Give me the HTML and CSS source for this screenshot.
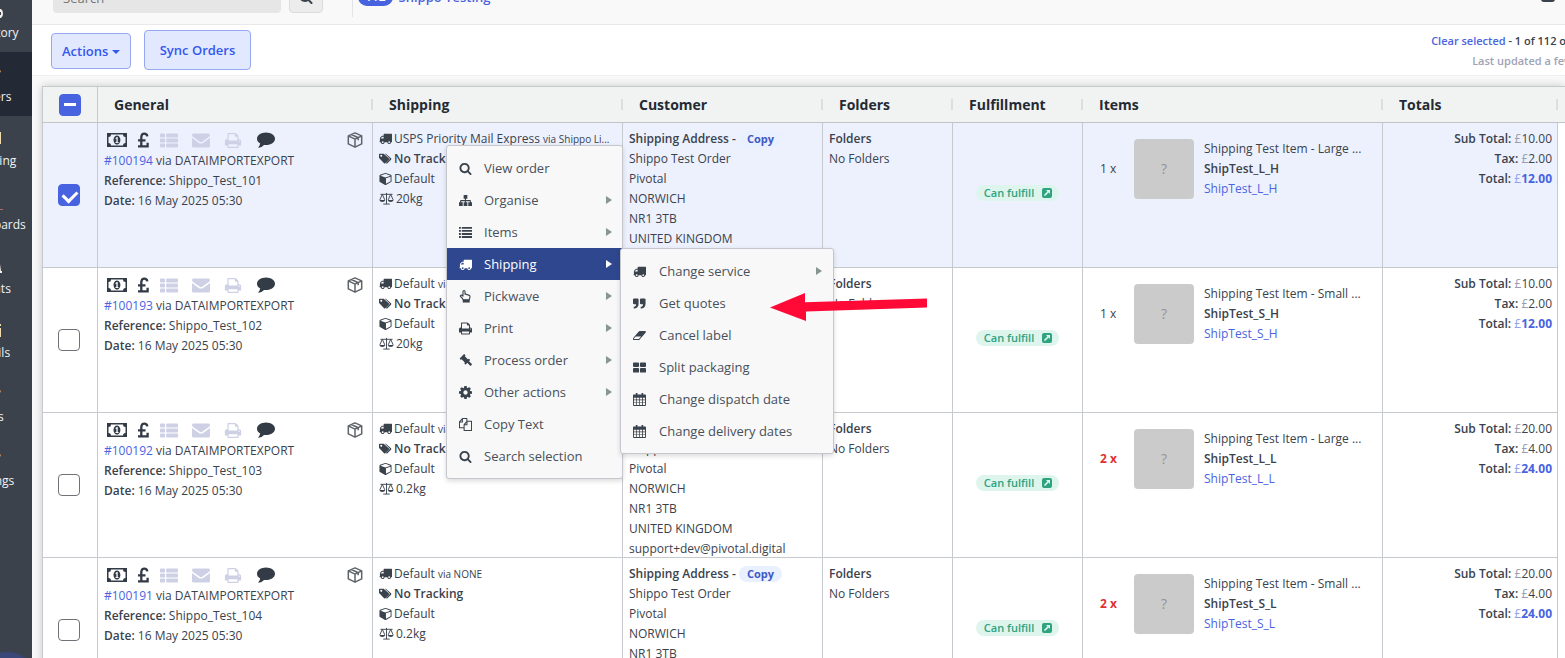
FILE: index.html
```html
<!DOCTYPE html>
<html lang="en">
<head>
  <meta charset="UTF-8" />
  <title>Orders</title>
  <link rel="stylesheet" href="styles.css">
</head>
<body>

  <!-- icon sprite -->
  <svg class="sprite" aria-hidden="true">
    <symbol id="i-search" viewBox="0 0 1792 1792"><path d="M1216 832q0-185-131.5-316.5t-316.5-131.5-316.5 131.5-131.5 316.5 131.5 316.5 316.5 131.5 316.5-131.5 131.5-316.5zm512 832q0 52-38 90t-90 38q-54 0-90-38l-343-342q-179 124-399 124-143 0-273.5-55.5t-225-150-150-225-55.5-273.5 55.5-273.5 150-225 225-150 273.5-55.5 273.5 55.5 225 150 150 225 55.5 273.5q0 220-124 399l343 343q37 37 37 90z"/></symbol>
    <symbol id="i-truck" viewBox="0 128 1792 1536"><path d="M640 1408q0-52-38-90t-90-38-90 38-38 90 38 90 90 38 90-38 38-90zm-384-512h384v-256h-158q-13 0-22 9l-195 195q-9 9-9 22v30zm1280 512q0-52-38-90t-90-38-90 38-38 90 38 90 90 38 90-38 38-90zm256-1088v1024q0 15-4 26.5t-13.5 18.5-16.5 11.5-23.5 6-22.5 2-25.5 0-22.5-.5q0 106-75 181t-181 75-181-75-75-181h-384q0 106-75 181t-181 75-181-75-75-181h-64q-3 0-22.5.5t-25.5 0-22.5-2-23.5-6-16.5-11.5-13.5-18.5-4-26.5q0-26 19-45t45-19v-320q0-8-.5-35t0-38 2.5-34.5 6.5-37 14-30.5 22.5-30l198-198q19-19 50.5-32t58.5-13h160v-192q0-26 19-45t45-19h1024q26 0 45 19t19 45z"/></symbol>
    <symbol id="i-tags" viewBox="0 0 16 14"><path fill-rule="evenodd" d="M.8 1h5l6.300 5.800q.7.800 0 1.600l-4.300 4.400q-.8.700-1.600 0L.4 6.800q-.4-.4-.4-1V1.800Q0 1 .8 1zM2.700 2.500a1.200 1.200 0 1 0 .1 0z"/><path d="M7.300 1h1.100l6.400 5.800q.8.800 0 1.600l-4.400 4.500q-.8.700-1.600 0l-.3-.3 4.500-4.600q.5-.8-.1-1.400z"/></symbol>
    <symbol id="i-cube" viewBox="0 0 1664 1792"><path d="M896 1629l640-349v-636l-640 233v752zm-64-865l698-254-698-254-698 254zm832-252v768q0 35-18 65t-49 47l-704 384q-28 16-61 16t-61-16l-704-384q-31-17-49-47t-18-65v-768q0-40 23-73t61-47l704-256q22-8 44-8t44 8l704 256q38 14 61 47t23 73z"/></symbol>
    <symbol id="i-scale" viewBox="0 0 16 14"><path fill="none" stroke="currentColor" d="M1.500 2.500h13M8 1v12M4.500 13h7M3.500 2.500L.8 8.500M3.500 2.500l2.700 6M12.500 2.500l-2.700 6M12.500 2.500l2.700 6"/><path d="M.3 8.500h6.400q-.6 2.300-3.200 2.300T.3 8.500zM9.300 8.500h6.400q-.6 2.300-3.200 2.300t-3.200-2.300z"/></symbol>
    <symbol id="i-money" viewBox="0 0 20 14"><path fill-rule="evenodd" d="M0 0h20v14H0zM4 1.500q0 2.500-2.500 2.500v6q2.500 0 2.500 2.500h12q0-2.500 2.500-2.500V4Q16 4 16 1.500z"/><path fill-rule="evenodd" d="M10 2.500a3.400 4.500 0 1 1-.1 0zM9.800 4L8.300 5.200l.6.700.5-.3V9H8.500v1h3V9h-.8V4z"/></symbol>
    <symbol id="i-gbp" viewBox="0 0 12 16"><path fill="none" stroke="currentColor" stroke-width="2.300" d="M10.300 4.300Q10 1.700 7.300 1.700T4.300 5v9.500M1 8.300h7.500M1 14.400h9.600v-3.700"/></symbol>
    <symbol id="i-thlist" viewBox="0 0 18 14"><path d="M.8 0h3.400q.8 0 .8.800v2.400q0 .8-.8.800H.8Q0 4 0 3.200V.8Q0 0 .8 0zM7 0h10.200q.8 0 .8.800v2.400q0 .8-.8.800H7q-.8 0-.8-.8V.8Q6.200 0 7 0zM.8 5h3.400q.8 0 .8.800v2.400q0 .8-.8.800H.8Q0 9 0 8.200V5.800Q0 5 .8 5zM7 5h10.200q.8 0 .8.800v2.400q0 .8-.8.800H7q-.8 0-.8-.8V5.800Q6.200 5 7 5zM.8 10h3.400q.8 0 .8.800v2.400q0 .8-.8.800H.8q-.8 0-.8-.8v-2.400q0-.8.8-.8zM7 10h10.200q.8 0 .8.800v2.400q0 .8-.8.800H7q-.8 0-.8-.8v-2.400q0-.8.8-.8z"/></symbol>
    <symbol id="i-mail" viewBox="0 0 18 14"><path d="M0 1.500Q0 0 1.500 0h15Q18 0 18 1.500q0 1.300-1.500 2.300l-6 4.200q-1.500 1-3 0l-6-4.200Q0 2.800 0 1.500z"/><path d="M0 4.600l6.500 4.600q2.500 1.700 5 0L18 4.600v7.900q0 1.500-1.500 1.500h-15Q0 14 0 12.500z"/></symbol>
    <symbol id="i-print" viewBox="0 128 1664 1536"><path d="M384 1536h896v-256h-896v256zm0-640h896v-384h-160q-40 0-68-28t-28-68v-160h-640v640zm1152 64q0-26-19-45t-45-19-45 19-19 45 19 45 45 19 45-19 19-45zm128 0v416q0 13-9.500 22.500t-22.500 9.500h-224v160q0 40-28 68t-68 28h-960q-40 0-68-28t-28-68v-160h-224q-13 0-22.500-9.500t-9.500-22.500v-416q0-79 56.500-135.500t135.500-56.500h64v-544q0-40 28-68t68-28h672q40 0 88 20t76 48l152 152q28 28 48 76t20 88v256h64q79 0 135.500 56.500t56.500 135.500z"/></symbol>
    <symbol id="i-comment" viewBox="0 0 18 16"><path d="M9 .5c5 0 9 2.800 9 6.300s-4 6.300-9 6.300q-1 0-2-.2-2.300 2.600-5.300 2.900-.6 0-.3-.6Q3 13.500 3.200 11.600 0 9.800 0 6.800C0 3.300 4 .5 9 .5z"/></symbol>
    <symbol id="i-box" viewBox="0 0 16 16"><path fill="none" stroke="currentColor" stroke-width="1.500" stroke-linejoin="round" d="M8 .9l6.700 3v8L8 15.200l-6.700-3.300v-8zM1.300 3.900L8 7.200l6.700-3.300M8 7.200v8M4.500 2.500l6.700 3.200v2.500"/></symbol>
    <symbol id="i-sitemap" viewBox="0 0 14 14"><path d="M5 1h4v4H7.500v1.500H12q.8 0 .8.800V9H14v4h-4V9h1.600V7.700H7.500V9H9v4H5V9h1.400V7.700h-4V9H4v4H0V9h1.200V7.300q0-.8.8-.8h4.400V5H5z"/></symbol>
    <symbol id="i-list" viewBox="0 0 14 14"><path d="M0 1h2v2H0zM3 1h11v2H3zM0 4.300h2v2H0zM3 4.300h11v2H3zM0 7.600h2v2H0zM3 7.600h11v2H3zM0 10.900h2v2H0zM3 10.900h11v2H3z"/></symbol>
    <symbol id="i-hand" viewBox="0 0 14 14"><path fill="none" stroke="currentColor" stroke-width="1.200" stroke-linejoin="round" d="M4.500 10.500Q3.800 8.700 1.700 7q-.7-.9.300-1.400 1-.3 2.300.9V1.700q.1-1.100 1.100-1.100t1.100 1.100v2.800q1.300-.4 1.700.5 1.300-.4 1.700.6 1.900-.2 1.900 1.500 0 1.700-.8 3.400z"/><path d="M4 10.500h7.500v3H4z"/></symbol>
    <symbol id="i-gavel" viewBox="0 0 14 14"><path d="M5.200.4q.5-.4 1 0l.5.600q.4.500 0 1l-.4.400 3.400 3.400.4-.4q.5-.4 1 0l.5.500q.4.500 0 1L7.500 11q-.5.400-1 0l-.5-.5q-.4-.5 0-1l.3-.3-3.500-3.500-.3.300q-.5.400-1 0L1 5.500q-.4-.5 0-1z"/><path d="M8 8.400l1.700-1.700 3.900 3.700q.6.700 0 1.400l-.5.600q-.7.600-1.400 0z"/></symbol>
    <symbol id="i-cog" viewBox="128 128 1536 1536"><path d="M1152 896q0-106-75-181t-181-75-181 75-75 181 75 181 181 75 181-75 75-181zm512-109v222q0 12-8 23t-20 13l-185 28q-19 54-39 91 35 50 107 138 10 12 10 25t-9 23q-27 37-99 108t-94 71q-12 0-26-9l-138-108q-44 23-91 38-16 136-29 186-7 28-36 28h-222q-14 0-24.500-8.500t-11.500-21.500l-28-184q-49-16-90-37l-141 107q-10 9-25 9-14 0-25-11-126-114-165-168-7-10-7-23 0-12 8-23 15-21 51-66.500t54-70.500q-27-50-41-99l-183-27q-13-2-21-12.500t-8-23.500v-222q0-12 8-23t19-13l186-28q14-46 39-92-40-57-107-138-10-12-10-24 0-10 9-23 26-36 98.500-107.500t94.500-71.500q13 0 26 10l138 107q44-23 91-38 16-136 29-186 7-28 36-28h222q14 0 24.500 8.500t11.500 21.500l28 184q49 16 90 37l142-107q9-9 24-9 13 0 25 10 129 119 165 170 7 8 7 22 0 12-8 23-15 21-51 66.500t-54 70.500q26 50 41 98l183 28q13 2 21 12.500t8 23.500z"/></symbol>
    <symbol id="i-copy" viewBox="0 0 14 14"><path fill="none" stroke="currentColor" stroke-width="1.100" stroke-linejoin="round" d="M5.500 10.500h-5V4.200L3.700.6h4.800v3M.5 4.200h3.200V.6M5.500 7.200l3.100-3.600h4.900v9.800h-8zM5.500 7.200h3.100V3.600"/></symbol>
    <symbol id="i-quote" viewBox="0 0 14 14"><path d="M1.200 1.500h3.600Q6 1.500 6 2.700v4.600q0 4.200-4.200 5.200H.8v-2h.6q2-.5 2-2.700H1.200Q0 7.800 0 6.600V2.700q0-1.200 1.200-1.200zM8.700 1.500h3.600q1.200 0 1.200 1.200v4.600q0 4.200-4.200 5.200h-1v-2h.6q2-.5 2-2.700H8.700q-1.200 0-1.200-1.200V2.700q0-1.200 1.200-1.200z"/></symbol>
    <symbol id="i-eraser" viewBox="0 128 1864 1536"><path d="M832 1408l336-384h-768l-336 384h768zm1013-1077q15 34 9.500 71.500t-30.500 65.500l-896 1024q-38 44-96 44h-768q-38 0-69.500-20.500t-47.500-54.500q-15-34-9.500-71.500t30.500-65.500l896-1024q38-44 96-44h768q38 0 69.500 20.500t47.500 54.500z"/></symbol>
    <symbol id="i-thlarge" viewBox="0 0 14 14"><path d="M1 1.500h4.500q1 0 1 1v3q0 1-1 1H1q-1 0-1-1v-3q0-1 1-1zM8.500 1.500H13q1 0 1 1v3q0 1-1 1H8.500q-1 0-1-1v-3q0-1 1-1zM1 7.500h4.500q1 0 1 1v3q0 1-1 1H1q-1 0-1-1v-3q0-1 1-1zM8.500 7.500H13q1 0 1 1v3q0 1-1 1H8.500q-1 0-1-1v-3q0-1 1-1z"/></symbol>
    <symbol id="i-calendar" viewBox="0 0 14 14"><path fill-rule="evenodd" d="M3 0h1.800v1.500h4.400V0H11v1.500h2q1 0 1 1V13q0 1-1 1H1q-1 0-1-1V2.500q0-1 1-1h2zM1 5v2h2.200V5zM4 5v2h2.500V5zM7.300 5v2h2.500V5zM10.700 5v2H13V5zM1 7.800v2.300h2.200V7.800zM4 7.800v2.300h2.500V7.800zM7.300 7.800v2.300h2.500V7.800zM10.700 7.800v2.300H13V7.800zM1 10.900V13h2.200v-2.100zM4 10.900V13h2.500v-2.100zM7.300 10.900V13h2.500v-2.100zM10.700 10.900V13H13v-2.100z"/></symbol>
    <symbol id="i-ext" viewBox="0 0 10 10"><path fill-rule="evenodd" d="M2 0h6q2 0 2 2v6q0 2-2 2H2q-2 0-2-2V2q0-2 2-2zM4 2l1.400 1.400L1.900 6.900l1.200 1.200 3.500-3.500L8 6V2z"/></symbol>
    <symbol id="n-stock" viewBox="0 0 24 24"><path fill-rule="evenodd" d="M2 10h19q2 1 2 4.500T21 19H2zM20 13v3h1v-3z"/></symbol>
    <symbol id="n-tag" viewBox="0 0 24 24"><path d="M4 5h13l4 3-1 2-4 4H4z"/></symbol>
    <symbol id="n-book" viewBox="0 0 24 24"><path d="M6 5h15v12H6z"/></symbol>
    <symbol id="n-chart" viewBox="0 0 24 24"><path d="M10 5h10v13h3v1H8V9h2z"/></symbol>
    <symbol id="n-user" viewBox="0 0 24 24"><path d="M12 9h8l1 7h1v2H4v-2z"/></symbol>
    <symbol id="n-mail" viewBox="0 0 24 24"><path d="M8 9h13v9H8zM14 5h7v2h-7z"/></symbol>
  </svg>

  <div class="app">

    <nav class="sidebar">
      <a href="#"><svg class="nav-icon light"><use href="#n-stock"/></svg>Inventory</a>
      <a href="#" class="active"><svg class="nav-icon"><use href="#n-tag"/></svg>Orders</a>
      <a href="#"><svg class="nav-icon sand"><use href="#n-book"/></svg>Shipping</a>
      <a href="#"><svg class="nav-icon rose"><use href="#n-chart"/></svg>Dashboards</a>
      <a href="#"><svg class="nav-icon light"><use href="#n-user"/></svg>Clients</a>
      <a href="#"><svg class="nav-icon sand"><use href="#n-mail"/></svg>Emails</a>
      <a href="#"><svg class="nav-icon"><use href="#n-tag"/></svg>Jobs</a>
      <a href="#"><svg class="nav-icon"><use href="#n-tag"/></svg>Settings</a>
      <span class="help-bubble"></span>
    </nav>

    <main class="main">

      <div class="topbar">
        <input type="text" class="search-input" placeholder="Search" aria-label="Search">
        <button class="search-btn" aria-label="Search"><svg class="icon"><use href="#i-search"/></svg></button>
        <a href="#" class="view-tab"><span class="count">112</span>Shippo Testing</a>
        <button class="save-btn" aria-label="Open"><svg class="icon"><use href="#i-ext"/></svg></button>
      </div>

      <div class="toolbar">
        <button class="btn btn-actions">Actions <span class="caret"></span></button>
        <button class="btn btn-sync">Sync Orders</button>
        <div class="status">
          <div class="status-line"><a href="#">Clear selected</a> - 1 of 112 orders selected</div>
          <div class="status-line muted">Last updated a few seconds ago</div>
        </div>
      </div>

      <div class="grid">
        <table class="orders">
          <colgroup>
            <col class="c-check"><col class="c-general"><col class="c-shipping"><col class="c-customer"><col class="c-folders"><col class="c-fulfil"><col class="c-items"><col class="c-totals"><col class="c-end">
          </colgroup>
          <thead>
            <tr>
              <th class="check"><input type="checkbox" class="box some" aria-label="Select all"></th>
              <th>General</th>
              <th>Shipping</th>
              <th>Customer</th>
              <th>Folders</th>
              <th>Fulfillment</th>
              <th>Items</th>
              <th>Totals</th>
              <th class="end"></th>
            </tr>
          </thead>
          <tbody>
            <tr class="selected">
              <td class="check"><input type="checkbox" class="box" aria-label="Select #100194" checked></td>
              <td>
                <div class="flags"><svg class="f-money"><use href="#i-money"/></svg><svg class="f-gbp"><use href="#i-gbp"/></svg><svg class="off"><use href="#i-thlist"/></svg><svg class="off"><use href="#i-mail"/></svg><svg class="off"><use href="#i-print"/></svg><svg><use href="#i-comment"/></svg><svg class="f-box"><use href="#i-box"/></svg></div>
                <div><a href="#">#100194</a> via DATAIMPORTEXPORT</div>
                <div><b>Reference:</b> Shippo_Test_101</div>
                <div><b>Date:</b> 16 May 2025 05:30</div>
              </td>
              <td>
                <div><svg class="icon s-icon"><use href="#i-truck"/></svg>USPS Priority Mail Express <small>via Shippo Li...</small></div>
                <div><svg class="icon s-icon"><use href="#i-tags"/></svg><b>No Tracking</b></div>
                <div><svg class="icon s-icon"><use href="#i-cube"/></svg>Default</div>
                <div><svg class="icon s-icon wide"><use href="#i-scale"/></svg>20kg</div>
              </td>
              <td>
                <div class="address">
                  <div><b>Shipping Address -</b> <button class="copy-btn">Copy</button></div>
                  <div>Shippo Test Order</div>
                  <div>Pivotal</div>
                  <div>NORWICH</div>
                  <div>NR1 3TB</div>
                  <div>UNITED KINGDOM</div>
                  <div>support+dev@pivotal.digital</div>
                </div>
              </td>
              <td><div><b>Folders</b></div><div>No Folders</div></td>
              <td class="fulfil"><span class="pill">Can fulfill <svg class="icon"><use href="#i-ext"/></svg></span></td>
              <td>
                <div class="item">
                  <span class="qty">1 x</span>
                  <span class="thumb">?</span>
                  <div><div>Shipping Test Item - Large ...</div><div><b>ShipTest_L_H</b></div><div><a href="#">ShipTest_L_H</a></div></div>
                </div>
              </td>
              <td class="totals">
                <div><b>Sub Total:</b> <i>£</i>10.00</div>
                <div><b>Tax:</b> <i>£</i>2.00</div>
                <div><b>Total:</b> <span class="sum"><i>£</i>12.00</span></div>
              </td>
              <td class="end"></td>
            </tr>
            <tr>
              <td class="check"><input type="checkbox" class="box" aria-label="Select #100193"></td>
              <td>
                <div class="flags"><svg class="f-money"><use href="#i-money"/></svg><svg class="f-gbp"><use href="#i-gbp"/></svg><svg class="off"><use href="#i-thlist"/></svg><svg class="off"><use href="#i-mail"/></svg><svg class="off"><use href="#i-print"/></svg><svg><use href="#i-comment"/></svg><svg class="f-box"><use href="#i-box"/></svg></div>
                <div><a href="#">#100193</a> via DATAIMPORTEXPORT</div>
                <div><b>Reference:</b> Shippo_Test_102</div>
                <div><b>Date:</b> 16 May 2025 05:30</div>
              </td>
              <td>
                <div><svg class="icon s-icon"><use href="#i-truck"/></svg>Default <small>via NONE</small></div>
                <div><svg class="icon s-icon"><use href="#i-tags"/></svg><b>No Tracking</b></div>
                <div><svg class="icon s-icon"><use href="#i-cube"/></svg>Default</div>
                <div><svg class="icon s-icon wide"><use href="#i-scale"/></svg>20kg</div>
              </td>
              <td>
                <div class="address">
                  <div><b>Shipping Address -</b> <button class="copy-btn">Copy</button></div>
                  <div>Shippo Test Order</div>
                  <div>Pivotal</div>
                  <div>NORWICH</div>
                  <div>NR1 3TB</div>
                  <div>UNITED KINGDOM</div>
                </div>
              </td>
              <td><div><b>Folders</b></div><div>No Folders</div></td>
              <td class="fulfil"><span class="pill">Can fulfill <svg class="icon"><use href="#i-ext"/></svg></span></td>
              <td>
                <div class="item">
                  <span class="qty">1 x</span>
                  <span class="thumb">?</span>
                  <div><div>Shipping Test Item - Small ...</div><div><b>ShipTest_S_H</b></div><div><a href="#">ShipTest_S_H</a></div></div>
                </div>
              </td>
              <td class="totals">
                <div><b>Sub Total:</b> <i>£</i>10.00</div>
                <div><b>Tax:</b> <i>£</i>2.00</div>
                <div><b>Total:</b> <span class="sum"><i>£</i>12.00</span></div>
              </td>
              <td class="end"></td>
            </tr>
            <tr>
              <td class="check"><input type="checkbox" class="box" aria-label="Select #100192"></td>
              <td>
                <div class="flags"><svg class="f-money"><use href="#i-money"/></svg><svg class="f-gbp"><use href="#i-gbp"/></svg><svg class="off"><use href="#i-thlist"/></svg><svg class="off"><use href="#i-mail"/></svg><svg class="off"><use href="#i-print"/></svg><svg><use href="#i-comment"/></svg><svg class="f-box"><use href="#i-box"/></svg></div>
                <div><a href="#">#100192</a> via DATAIMPORTEXPORT</div>
                <div><b>Reference:</b> Shippo_Test_103</div>
                <div><b>Date:</b> 16 May 2025 05:30</div>
              </td>
              <td>
                <div><svg class="icon s-icon"><use href="#i-truck"/></svg>Default <small>via NONE</small></div>
                <div><svg class="icon s-icon"><use href="#i-tags"/></svg><b>No Tracking</b></div>
                <div><svg class="icon s-icon"><use href="#i-cube"/></svg>Default</div>
                <div><svg class="icon s-icon wide"><use href="#i-scale"/></svg>0.2kg</div>
              </td>
              <td>
                <div class="address">
                  <div><b>Shipping Address -</b> <button class="copy-btn">Copy</button></div>
                  <div>Shippo Test Order</div>
                  <div>Pivotal</div>
                  <div>NORWICH</div>
                  <div>NR1 3TB</div>
                  <div>UNITED KINGDOM</div>
                  <div>support+dev@pivotal.digital</div>
                </div>
              </td>
              <td><div><b>Folders</b></div><div>No Folders</div></td>
              <td class="fulfil"><span class="pill">Can fulfill <svg class="icon"><use href="#i-ext"/></svg></span></td>
              <td>
                <div class="item">
                  <span class="qty many">2 x</span>
                  <span class="thumb">?</span>
                  <div><div>Shipping Test Item - Large ...</div><div><b>ShipTest_L_L</b></div><div><a href="#">ShipTest_L_L</a></div></div>
                </div>
              </td>
              <td class="totals">
                <div><b>Sub Total:</b> <i>£</i>20.00</div>
                <div><b>Tax:</b> <i>£</i>4.00</div>
                <div><b>Total:</b> <span class="sum"><i>£</i>24.00</span></div>
              </td>
              <td class="end"></td>
            </tr>
            <tr>
              <td class="check"><input type="checkbox" class="box" aria-label="Select #100191"></td>
              <td>
                <div class="flags"><svg class="f-money"><use href="#i-money"/></svg><svg class="f-gbp"><use href="#i-gbp"/></svg><svg class="off"><use href="#i-thlist"/></svg><svg class="off"><use href="#i-mail"/></svg><svg class="off"><use href="#i-print"/></svg><svg><use href="#i-comment"/></svg><svg class="f-box"><use href="#i-box"/></svg></div>
                <div><a href="#">#100191</a> via DATAIMPORTEXPORT</div>
                <div><b>Reference:</b> Shippo_Test_104</div>
                <div><b>Date:</b> 16 May 2025 05:30</div>
              </td>
              <td>
                <div><svg class="icon s-icon"><use href="#i-truck"/></svg>Default <small>via NONE</small></div>
                <div><svg class="icon s-icon"><use href="#i-tags"/></svg><b>No Tracking</b></div>
                <div><svg class="icon s-icon"><use href="#i-cube"/></svg>Default</div>
                <div><svg class="icon s-icon wide"><use href="#i-scale"/></svg>0.2kg</div>
              </td>
              <td>
                <div class="address">
                  <div><b>Shipping Address -</b> <button class="copy-btn">Copy</button></div>
                  <div>Shippo Test Order</div>
                  <div>Pivotal</div>
                  <div>NORWICH</div>
                  <div>NR1 3TB</div>
                  <div>UNITED KINGDOM</div>
                </div>
              </td>
              <td><div><b>Folders</b></div><div>No Folders</div></td>
              <td class="fulfil"><span class="pill">Can fulfill <svg class="icon"><use href="#i-ext"/></svg></span></td>
              <td>
                <div class="item">
                  <span class="qty many">2 x</span>
                  <span class="thumb">?</span>
                  <div><div>Shipping Test Item - Small ...</div><div><b>ShipTest_S_L</b></div><div><a href="#">ShipTest_S_L</a></div></div>
                </div>
              </td>
              <td class="totals">
                <div><b>Sub Total:</b> <i>£</i>20.00</div>
                <div><b>Tax:</b> <i>£</i>4.00</div>
                <div><b>Total:</b> <span class="sum"><i>£</i>24.00</span></div>
              </td>
              <td class="end"></td>
            </tr>
          </tbody>
        </table>
      </div>
    </main>

    <!-- right click menu -->
    <ul class="menu context-menu">
      <li><button><svg class="icon"><use href="#i-search"/></svg>View order</button></li>
      <li><button class="more"><svg class="icon"><use href="#i-sitemap"/></svg>Organise</button></li>
      <li><button class="more"><svg class="icon"><use href="#i-list"/></svg>Items</button></li>
      <li class="open">
        <button class="more"><svg class="icon"><use href="#i-truck"/></svg>Shipping</button>
        <ul class="menu submenu">
          <li><button class="more"><svg class="icon"><use href="#i-truck"/></svg>Change service</button></li>
          <li><button><svg class="icon"><use href="#i-quote"/></svg>Get quotes</button></li>
          <li><button><svg class="icon"><use href="#i-eraser"/></svg>Cancel label</button></li>
          <li><button><svg class="icon"><use href="#i-thlarge"/></svg>Split packaging</button></li>
          <li><button><svg class="icon"><use href="#i-calendar"/></svg>Change dispatch date</button></li>
          <li><button><svg class="icon"><use href="#i-calendar"/></svg>Change delivery dates</button></li>
        </ul>
      </li>
      <li><button class="more"><svg class="icon"><use href="#i-hand"/></svg>Pickwave</button></li>
      <li><button class="more"><svg class="icon"><use href="#i-print"/></svg>Print</button></li>
      <li><button class="more"><svg class="icon"><use href="#i-gavel"/></svg>Process order</button></li>
      <li><button class="more"><svg class="icon"><use href="#i-cog"/></svg>Other actions</button></li>
      <li><button><svg class="icon"><use href="#i-copy"/></svg>Copy Text</button></li>
      <li><button><svg class="icon"><use href="#i-search"/></svg>Search selection</button></li>
    </ul>

    <svg class="pointer" viewBox="0 0 158 30" aria-hidden="true"><path d="M0 15.500L35 1v9.300L157 6.500v9L36 19.500V29z"/></svg>

  </div>

</body>
</html>
```

FILE: styles.css
```css
* {
  box-sizing: border-box;
}

body {
  margin: 0;
  background-color: #f9f9f9;
  color: #3a424c;
  font-family: 'Open Sans', 'Noto Sans', sans-serif;
  font-size: 12px;
  line-height: 20px;
}

a {
  color: #4a64e0;
  text-decoration: none;
}

b {
  font-weight: 600;
}

button, input {
  font-family: inherit;
}

.sprite {
  display: none;
}

svg {
  fill: currentColor;
}

.icon {
  width: 14px;
  height: 14px;
  flex: none;
}

.app {
  position: relative;
  display: flex;
  height: 100vh;
  overflow: hidden;
}

/* sidebar, partly scrolled off the left edge */
.sidebar {
  position: relative;
  flex: none;
  width: 84px;
  margin: -12px 0 0 -52px;
  background-color: #3b424c;
}

.sidebar a {
  display: flex;
  flex-direction: column;
  align-items: center;
  height: 64px;
  padding: 11px 0 0 4px;
  color: #f0f2f4;
  line-height: 20px;
}

.sidebar a.active {
  background-color: #232a36;
}

.nav-icon {
  flex: none;
  width: 24px;
  height: 24px;
  color: #e89a5a;
}

.nav-icon.light {
  color: #f3efe8;
}

.nav-icon.sand {
  color: #f2dcae;
}

.nav-icon.rose {
  color: #b4676a;
}

.help-bubble {
  position: absolute;
  left: 29px;
  bottom: -54px;
  width: 60px;
  height: 60px;
  border-radius: 50%;
  background-color: #3c4779;
}

.main {
  flex: 1;
  min-width: 0;
}

.topbar {
  display: flex;
  align-items: center;
  height: 56px;
  margin-top: -31px;
  padding: 0 10px 3px 21px;
  border-bottom: 1px solid #e8e8e8;
}

.search-input {
  width: 228px;
  height: 36px;
  margin-right: 8px;
  padding: 6px 10px 0;
  border: 0;
  border-radius: 4px;
  background-color: #e6e6e6;
  color: #8a8a8a;
  font-size: 13px;
}

.search-btn {
  width: 34px;
  height: 36px;
  padding: 8px 0 0;
  border: 1px solid #dcdcdc;
  border-radius: 4px;
  background-color: #ececec;
  color: #3a424c;
}

.view-tab {
  display: flex;
  align-items: center;
  height: 44px;
  margin-left: 29px;
  padding: 4px 0 0 5px;
  border-left: 1px solid #e4e4e4;
  font-size: 13px;
  font-weight: 600;
}

.count {
  margin-right: 6px;
  padding: 0 7px;
  border-radius: 10px;
  background-color: #4863df;
  color: #fff;
  font-size: 12px;
  line-height: 18px;
}

.save-btn {
  height: 14px;
  margin-left: auto;
  padding: 0;
  border: 0;
  background: none;
  color: #3a424c;
}

.toolbar {
  display: flex;
  align-items: center;
  height: 51px;
  padding-left: 19px;
  background-color: #fff;
  border-bottom: 1px solid #efefef;
}

.btn {
  height: 40px;
  margin-right: 13px;
  padding: 0 15px;
  border: 1px solid #97a8f2;
  border-radius: 4px;
  background-color: #e2e8fe;
  color: #3457ee;
  font-size: 13px;
  font-weight: 600;
}

.btn-actions {
  height: 36px;
  margin-top: 2px;
  padding: 0 10px;
}

.caret {
  display: inline-block;
  border: 4px solid transparent;
  border-top-color: #3457ee;
  border-bottom: 0;
  vertical-align: 2px;
}

.status {
  margin: 2px -76px 0 auto;
  text-align: right;
  font-size: 11px;
  font-weight: 600;
  white-space: nowrap;
}

.status-line.muted {
  color: #a0a3b5;
}

.grid {
  margin: 10px 0 0 10px;
  background-color: #fff;
  box-shadow: 0 0 9px rgba(0, 0, 0, 0.2);
}

.orders {
  width: 100%;
  table-layout: fixed;
  border-collapse: separate;
  border-spacing: 0;
  border-left: 1px solid #c6c9cd;
}

.c-check { width: 55px; }
.c-general { width: 275px; }
.c-shipping { width: 250px; }
.c-customer { width: 200px; }
.c-folders { width: 130px; }
.c-fulfil { width: 130px; }
.c-totals { width: 175px; }
.c-end { width: 7px; }

.orders th {
  height: 37px;
  padding: 0 16px;
  border-top: 1px solid #c6cbca;
  border-bottom: 1px solid #c2c5c8;
  background: #f1f3f2 linear-gradient(#dcdedd, #dcdedd) right 12px / 2px 11px no-repeat;
  color: #232a33;
  font-size: 14px;
  font-weight: 700;
  text-align: left;
}

.orders th.check {
  border-right: 1px solid #c6c9cd;
}

.orders th.check,
.orders th.end {
  background-image: none;
}

.orders td {
  height: 145px;
  padding: 6px 6px 0;
  border-right: 1px solid #c6c9cd;
  border-bottom: 1px solid #c6c9cd;
  vertical-align: top;
  white-space: nowrap;
}

.orders .selected td {
  background-color: #edf1fe;
}

.orders .selected td.end,
.orders td.end {
  padding: 0;
  border: 0;
  background: none;
}

.orders .check {
  padding: 0;
  text-align: center;
  vertical-align: middle;
}

.orders td.check {
  padding-right: 2px;
}

.box {
  display: block;
  width: 22px;
  height: 22px;
  margin: 0 auto;
  appearance: none;
  border: 1px solid #6e7276;
  border-radius: 4px;
  background-color: #fff;
}

.box:checked,
.box.some {
  border-color: #4863df;
  background-color: #4863df;
}

.box:checked::before {
  content: "";
  display: block;
  width: 7px;
  height: 11px;
  margin: 3px 0 0 6px;
  border: solid #fff;
  border-width: 0 3px 3px 0;
  transform: rotate(45deg);
}

.box.some::before {
  content: "";
  display: block;
  width: 12px;
  height: 3px;
  margin: 8px 0 0 4px;
  background-color: #fff;
}

.flags {
  display: grid;
  grid-template-columns: 26px 26px 26px 38px 26px 40px 1fr;
  justify-items: center;
  align-items: center;
  height: 22px;
  color: #333b46;
}

.flags svg {
  width: 18px;
  height: 16px;
}

.flags .f-money {
  width: 20px;
  height: 14px;
}

.flags .f-gbp {
  width: 12px;
}

.flags .off {
  height: 15px;
  color: #ced1e6;
}

.flags .f-box {
  justify-self: end;
  margin-right: 2px;
  color: #5f6469;
}

.s-icon {
  width: 13px;
  height: 13px;
  margin-right: 2px;
  vertical-align: -2px;
}

.s-icon.wide {
  width: 15px;
}

small {
  font-size: 10px;
}

.address {
  max-height: 138px;
  overflow: hidden;
}

.copy-btn {
  height: 16px;
  padding: 0 8px;
  border: 0;
  border-radius: 8px;
  background-color: #e9f0ff;
  color: #4058c4;
  font-size: 11px;
  font-weight: 700;
  line-height: 16px;
}

.orders td.fulfil {
  padding: 0 0 4px;
  text-align: center;
  vertical-align: middle;
}

.pill {
  display: inline-flex;
  align-items: center;
  gap: 8px;
  height: 16px;
  padding: 0 7px 0 8px;
  border-radius: 8px;
  background-color: #def5ee;
  color: #30a27f;
  font-size: 11px;
  font-weight: 600;
}

.pill .icon {
  width: 10px;
  height: 10px;
}

.item {
  display: grid;
  grid-template-columns: 34px 60px 1fr;
  align-items: center;
  padding: 10px 11px 0;
}

.thumb {
  display: grid;
  place-items: center;
  height: 60px;
  border-radius: 4px;
  background-color: #cbcbcb;
  color: #949494;
  font-size: 14px;
}

.thumb + div {
  padding-left: 10px;
}

.qty.many {
  color: #e03131;
  font-weight: 700;
}

.orders td.totals {
  padding-right: 5px;
  text-align: right;
}

.totals i {
  color: #9a9eb0;
  font-style: normal;
}

.totals .sum {
  color: #4863df;
  font-weight: 700;
}

.totals .sum i {
  color: #93a3f0;
  font-weight: 400;
}

/* menus */
.menu {
  position: absolute;
  margin: 0;
  padding: 6px 0;
  border: 1px solid #c5c7cc;
  border-radius: 3px;
  background-color: #f8f8f8;
  box-shadow: 0 2px 5px rgba(0, 0, 0, 0.15);
  list-style: none;
}

.context-menu {
  left: 446px;
  top: 145px;
  width: 177px;
}

.submenu {
  left: 173px;
  top: 0;
  width: 214px;
}

.menu li {
  position: relative;
}

.menu button {
  display: flex;
  align-items: center;
  gap: 12px;
  width: 100%;
  height: 32px;
  padding: 0 10px 0 12px;
  border: 0;
  background: none;
  color: #48505a;
  font-size: 13px;
  text-align: left;
}

.menu .submenu button {
  gap: 13px;
  padding-right: 11px;
}

.menu .icon {
  width: 13px;
  height: 13px;
  color: #3a424c;
}

.menu .more::after {
  content: "";
  margin-left: auto;
  border: 4px solid transparent;
  border-left: 6px solid #869592;
  border-right: 0;
}

.menu .open > button {
  background-color: #2f478e;
  color: #fff;
}

.menu .open > button .icon {
  color: #fff;
}

.menu .open > button::after {
  border-left-color: #fff;
}

.pointer {
  position: absolute;
  left: 770px;
  top: 292px;
  width: 158px;
  height: 30px;
  fill: #ff0a36;
}
```
